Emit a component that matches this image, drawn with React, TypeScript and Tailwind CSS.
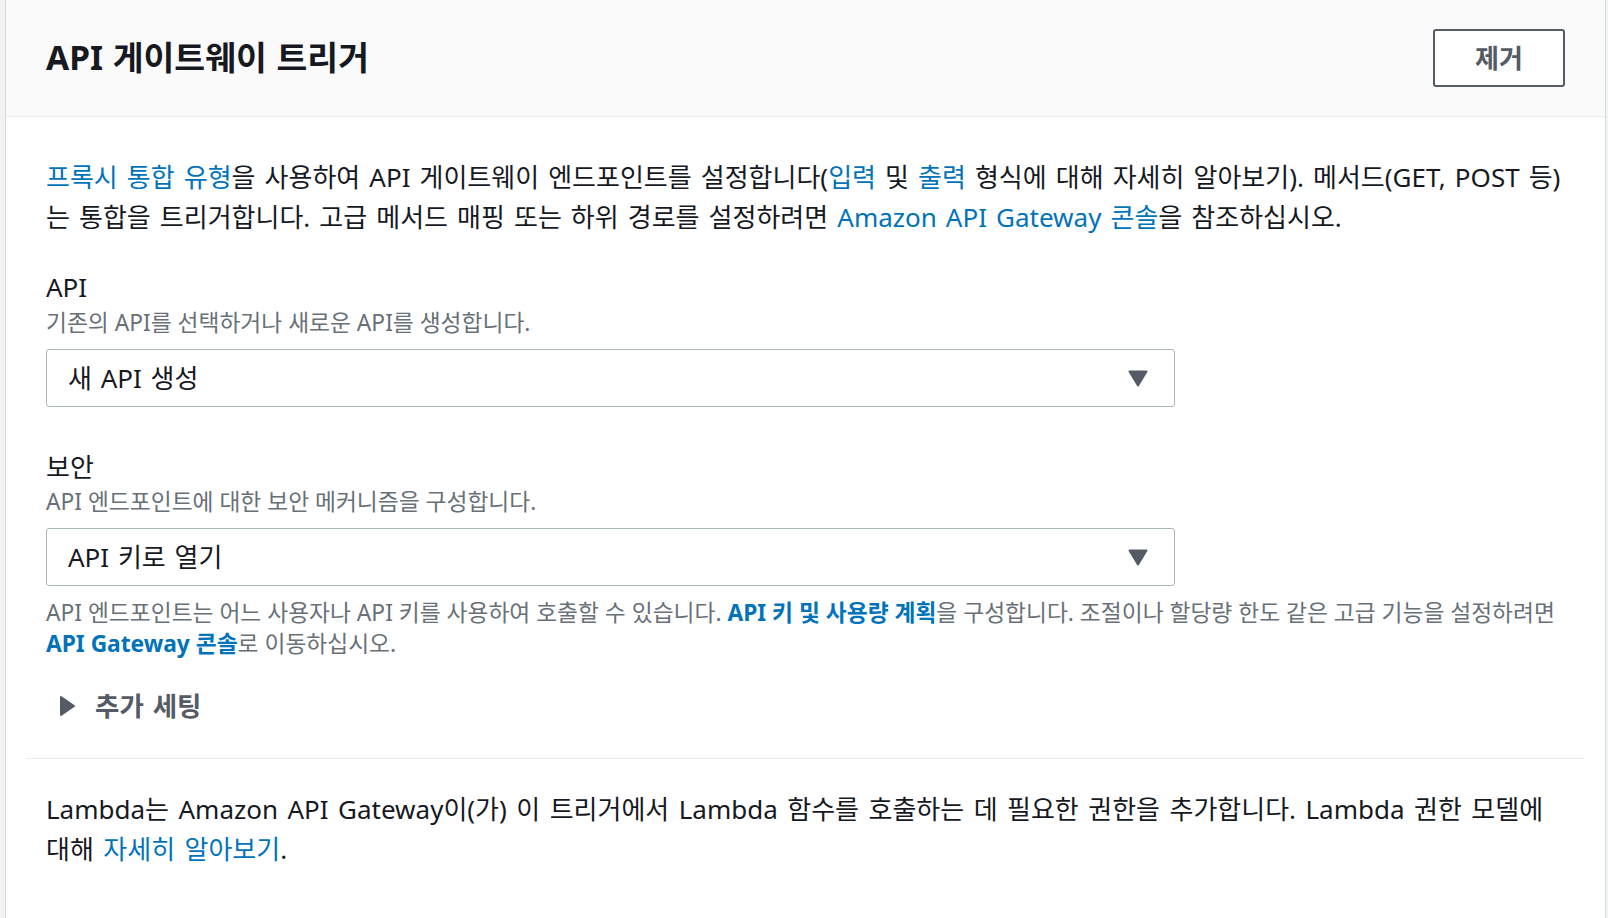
import React from "react";

const Caret = () => (
  <svg width="20" height="17" viewBox="0 0 20 17" className="shrink-0">
    <path d="M1.5 1.5 L18.5 1.5 L10 15.5 Z" fill="#545b64" stroke="#545b64" strokeWidth="2" strokeLinejoin="round" />
  </svg>
);

const RightTri = () => (
  <svg width="18" height="22" viewBox="0 0 18 22" className="shrink-0">
    <path d="M2 2 L15 11 L2 20 Z" fill="#545b64" stroke="#545b64" strokeWidth="2" strokeLinejoin="round" />
  </svg>
);

function Select({ value }: { value: string }) {
  return (
    <div className="w-[1129px] h-[58px] border border-[#aab7b8] rounded-[3px] bg-white flex items-center justify-between pl-[21px] pr-[26px]">
      <span className="text-[26px] text-[#16191f] leading-none [word-spacing:2px]">{value}</span>
      <Caret />
    </div>
  );
}

export default function App() {
  return (
    <div className="min-h-screen bg-[#f2f3f3] pl-[5px] pr-[2px] font-['Noto_Sans','Noto_Sans_CJK_KR',sans-serif]">
      <div className="min-h-screen bg-white border-x border-[#d5dbdb]">
        <div className="h-[117px] bg-[#fafafa] border-b border-[#eaeded] flex items-center justify-between px-[40px]">
          <h2 className="text-[33.5px] font-bold text-[#16191f] leading-none [word-spacing:1px]">API 게이트웨이 트리거</h2>
          <button className="w-[132px] h-[58px] border-2 border-[#545b64] rounded-[3px] bg-white text-[26px] font-bold text-[#545b64]">
            제거
          </button>
        </div>

        <div className="px-[40px] pt-[40px]">
          <p className="text-[26px] leading-[40px] text-[#16191f] whitespace-nowrap [word-spacing:2.3px]">
            <span className="text-[#0073bb]">프록시 통합 유형</span>을 사용하여 API 게이트웨이 엔드포인트를 설정합니다(
            <span className="text-[#0073bb]">입력</span> 및 <span className="text-[#0073bb]">출력</span> 형식에 대해 자세히 알아보기). 메서드(GET, POST 등)
            <br />는 통합을 트리거합니다. 고급 메서드 매핑 또는 하위 경로를 설정하려면{" "}
            <span className="text-[#0073bb]">Amazon API Gateway 콘솔</span>을 참조하십시오.
          </p>

          <div className="mt-[34px] text-[26px] leading-[32px] text-[#16191f]">API</div>
          <div className="mt-[5px] text-[22.75px] leading-[30px] text-[#687078]">기존의 API를 선택하거나 새로운 API를 생성합니다.</div>
          <div className="mt-[11px]">
            <Select value="새 API 생성" />
          </div>

          <div className="mt-[44px] text-[26px] leading-[32px] text-[#16191f]">보안</div>
          <div className="mt-[4px] text-[22.75px] leading-[30px] text-[#687078]">API 엔드포인트에 대한 보안 메커니즘을 구성합니다.</div>
          <div className="mt-[11px]">
            <Select value="API 키로 열기" />
          </div>

          <p className="mt-[11px] text-[22.75px] leading-[31px] text-[#687078] whitespace-nowrap">
            API 엔드포인트는 어느 사용자나 API 키를 사용하여 호출할 수 있습니다.{" "}
            <span className="font-bold text-[#0073bb]">API 키 및 사용량 계획</span>을 구성합니다. 조절이나 할당량 한도 같은 고급 기능을 설정하려면
            <br />
            <span className="font-bold text-[#0073bb]">API Gateway 콘솔</span>로 이동하십시오.
          </p>

          <div className="mt-[31px] h-[32px] flex items-center pl-[13px] gap-[18px]">
            <RightTri />
            <span className="text-[26.5px] font-bold text-[#545b64] leading-none [word-spacing:2px]">추가 세팅</span>
          </div>
        </div>

        <div className="mt-[36px] mx-[20px] border-t border-[#eaeded]"></div>

        <div className="px-[40px] pt-[30px] pb-[40px]">
          <p className="text-[26px] leading-[40px] text-[#16191f] whitespace-nowrap [word-spacing:2.7px]">
            Lambda는 Amazon API Gateway이(가) 이 트리거에서 Lambda 함수를 호출하는 데 필요한 권한을 추가합니다. Lambda 권한 모델에
            <br />
            대해 <span className="text-[#0073bb]">자세히 알아보기</span>.
          </p>
        </div>
      </div>
    </div>
  );
}
